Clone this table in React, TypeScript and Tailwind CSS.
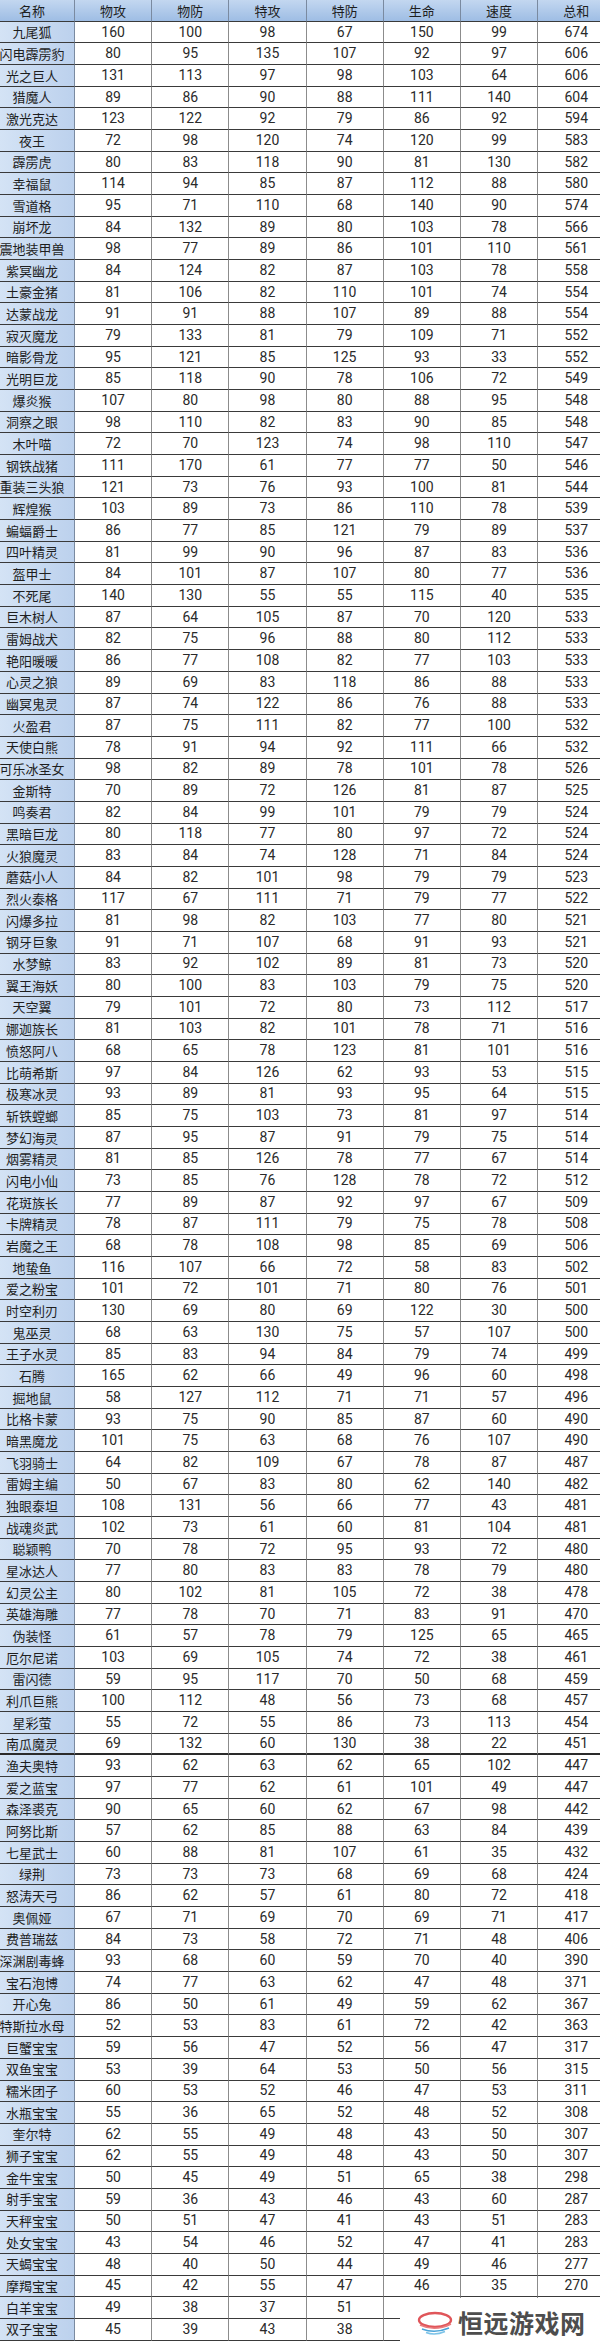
import React from "react";

type Row = [string, ...(number | null)[]];

const HEAD = ["名称", "物攻", "物防", "特攻", "特防", "生命", "速度", "总和"];

// name, 物攻, 物防, 特攻, 特防, 生命, 速度, 总和
const ROWS: Row[] = [
  ["九尾狐", 160, 100, 98, 67, 150, 99, 674],
  ["闪电霹雳豹", 80, 95, 135, 107, 92, 97, 606],
  ["光之巨人", 131, 113, 97, 98, 103, 64, 606],
  ["猎魔人", 89, 86, 90, 88, 111, 140, 604],
  ["激光克达", 123, 122, 92, 79, 86, 92, 594],
  ["夜王", 72, 98, 120, 74, 120, 99, 583],
  ["霹雳虎", 80, 83, 118, 90, 81, 130, 582],
  ["幸福鼠", 114, 94, 85, 87, 112, 88, 580],
  ["雪道格", 95, 71, 110, 68, 140, 90, 574],
  ["崩坏龙", 84, 132, 89, 80, 103, 78, 566],
  ["震地装甲兽", 98, 77, 89, 86, 101, 110, 561],
  ["紫冥幽龙", 84, 124, 82, 87, 103, 78, 558],
  ["土豪金猪", 81, 106, 82, 110, 101, 74, 554],
  ["达蒙战龙", 91, 91, 88, 107, 89, 88, 554],
  ["寂灭魔龙", 79, 133, 81, 79, 109, 71, 552],
  ["暗影骨龙", 95, 121, 85, 125, 93, 33, 552],
  ["光明巨龙", 85, 118, 90, 78, 106, 72, 549],
  ["爆炎猴", 107, 80, 98, 80, 88, 95, 548],
  ["洞察之眼", 98, 110, 82, 83, 90, 85, 548],
  ["木叶喵", 72, 70, 123, 74, 98, 110, 547],
  ["钢铁战猪", 111, 170, 61, 77, 77, 50, 546],
  ["重装三头狼", 121, 73, 76, 93, 100, 81, 544],
  ["辉煌猴", 103, 89, 73, 86, 110, 78, 539],
  ["蝙蝠爵士", 86, 77, 85, 121, 79, 89, 537],
  ["四叶精灵", 81, 99, 90, 96, 87, 83, 536],
  ["盔甲士", 84, 101, 87, 107, 80, 77, 536],
  ["不死尾", 140, 130, 55, 55, 115, 40, 535],
  ["巨木树人", 87, 64, 105, 87, 70, 120, 533],
  ["雷姆战犬", 82, 75, 96, 88, 80, 112, 533],
  ["艳阳暖暖", 86, 77, 108, 82, 77, 103, 533],
  ["心灵之狼", 89, 69, 83, 118, 86, 88, 533],
  ["幽冥鬼灵", 87, 74, 122, 86, 76, 88, 533],
  ["火盈君", 87, 75, 111, 82, 77, 100, 532],
  ["天使白熊", 78, 91, 94, 92, 111, 66, 532],
  ["可乐冰圣女", 98, 82, 89, 78, 101, 78, 526],
  ["金斯特", 70, 89, 72, 126, 81, 87, 525],
  ["鸣奏君", 82, 84, 99, 101, 79, 79, 524],
  ["黑暗巨龙", 80, 118, 77, 80, 97, 72, 524],
  ["火狼魔灵", 83, 84, 74, 128, 71, 84, 524],
  ["蘑菇小人", 84, 82, 101, 98, 79, 79, 523],
  ["烈火泰格", 117, 67, 111, 71, 79, 77, 522],
  ["闪爆多拉", 81, 98, 82, 103, 77, 80, 521],
  ["钢牙巨象", 91, 71, 107, 68, 91, 93, 521],
  ["水梦鲸", 83, 92, 102, 89, 81, 73, 520],
  ["翼王海妖", 80, 100, 83, 103, 79, 75, 520],
  ["天空翼", 79, 101, 72, 80, 73, 112, 517],
  ["娜迦族长", 81, 103, 82, 101, 78, 71, 516],
  ["愤怒阿八", 68, 65, 78, 123, 81, 101, 516],
  ["比萌希斯", 97, 84, 126, 62, 93, 53, 515],
  ["极寒冰灵", 93, 89, 81, 93, 95, 64, 515],
  ["斩铁螳螂", 85, 75, 103, 73, 81, 97, 514],
  ["梦幻海灵", 87, 95, 87, 91, 79, 75, 514],
  ["烟雾精灵", 81, 85, 126, 78, 77, 67, 514],
  ["闪电小仙", 73, 85, 76, 128, 78, 72, 512],
  ["花斑族长", 77, 89, 87, 92, 97, 67, 509],
  ["卡牌精灵", 78, 87, 111, 79, 75, 78, 508],
  ["岩魔之王", 68, 78, 108, 98, 85, 69, 506],
  ["地蛰鱼", 116, 107, 66, 72, 58, 83, 502],
  ["爱之粉宝", 101, 72, 101, 71, 80, 76, 501],
  ["时空利刃", 130, 69, 80, 69, 122, 30, 500],
  ["鬼巫灵", 68, 63, 130, 75, 57, 107, 500],
  ["王子水灵", 85, 83, 94, 84, 79, 74, 499],
  ["石腾", 165, 62, 66, 49, 96, 60, 498],
  ["掘地鼠", 58, 127, 112, 71, 71, 57, 496],
  ["比格卡蒙", 93, 75, 90, 85, 87, 60, 490],
  ["暗黑魔龙", 101, 75, 63, 68, 76, 107, 490],
  ["飞羽骑士", 64, 82, 109, 67, 78, 87, 487],
  ["雷姆主编", 50, 67, 83, 80, 62, 140, 482],
  ["独眼泰坦", 108, 131, 56, 66, 77, 43, 481],
  ["战魂炎武", 102, 73, 61, 60, 81, 104, 481],
  ["聪颖鸭", 70, 78, 72, 95, 93, 72, 480],
  ["星冰达人", 77, 80, 83, 83, 78, 79, 480],
  ["幻灵公主", 80, 102, 81, 105, 72, 38, 478],
  ["英雄海雕", 77, 78, 70, 71, 83, 91, 470],
  ["伪装怪", 61, 57, 78, 79, 125, 65, 465],
  ["厄尔尼诺", 103, 69, 105, 74, 72, 38, 461],
  ["雷闪德", 59, 95, 117, 70, 50, 68, 459],
  ["利爪巨熊", 100, 112, 48, 56, 73, 68, 457],
  ["星彩萤", 55, 72, 55, 86, 73, 113, 454],
  ["南瓜魔灵", 69, 132, 60, 130, 38, 22, 451],
  ["渔夫奥特", 93, 62, 63, 62, 65, 102, 447],
  ["爱之蓝宝", 97, 77, 62, 61, 101, 49, 447],
  ["森泽裘克", 90, 65, 60, 62, 67, 98, 442],
  ["阿努比斯", 57, 62, 85, 88, 63, 84, 439],
  ["七星武士", 60, 88, 81, 107, 61, 35, 432],
  ["绿荆", 73, 73, 73, 68, 69, 68, 424],
  ["怒涛天弓", 86, 62, 57, 61, 80, 72, 418],
  ["奥佩娅", 67, 71, 69, 70, 69, 71, 417],
  ["费普瑞兹", 84, 73, 58, 72, 71, 48, 406],
  ["深渊剧毒蜂", 93, 68, 60, 59, 70, 40, 390],
  ["宝石泡博", 74, 77, 63, 62, 47, 48, 371],
  ["开心兔", 86, 50, 61, 49, 59, 62, 367],
  ["特斯拉水母", 52, 53, 83, 61, 72, 42, 363],
  ["巨蟹宝宝", 59, 56, 47, 52, 56, 47, 317],
  ["双鱼宝宝", 53, 39, 64, 53, 50, 56, 315],
  ["糯米团子", 60, 53, 52, 46, 47, 53, 311],
  ["水瓶宝宝", 55, 36, 65, 52, 48, 52, 308],
  ["奎尔特", 62, 55, 49, 48, 43, 50, 307],
  ["狮子宝宝", 62, 55, 49, 48, 43, 50, 307],
  ["金牛宝宝", 50, 45, 49, 51, 65, 38, 298],
  ["射手宝宝", 59, 36, 43, 46, 43, 60, 287],
  ["天秤宝宝", 50, 51, 47, 41, 43, 51, 283],
  ["处女宝宝", 43, 54, 46, 52, 47, 41, 283],
  ["天蝎宝宝", 48, 40, 50, 44, 49, 46, 277],
  ["摩羯宝宝", 45, 42, 55, 47, 46, 35, 270],
  ["白羊宝宝", 49, 38, 37, 51, null, null, null],
  ["双子宝宝", 45, 39, 43, 38, null, null, null],
];

const CJK = "font-['Noto_Sans_CJK_SC','Noto_Sans',sans-serif]";

function Watermark() {
  return (
    <div className="absolute left-[400px] top-[2298px] flex h-[49px] w-[200px] items-center gap-[4px] bg-white pl-[16px]">
      <svg width="38" height="26" viewBox="0 0 38 26">
        <ellipse cx="19" cy="10" rx="16" ry="7" fill="none" stroke="#e0565a" strokeWidth="2.4" />
        <path d="M4 15 Q19 22 35 14" fill="none" stroke="#e97c7e" strokeWidth="1.6" />
        <path d="M6 19 Q19 24 33 18" fill="none" stroke="#4aa3d8" strokeWidth="1.6" />
        <path d="M10 22.5 Q19 26 29 21.5" fill="none" stroke="#7cc3e8" strokeWidth="1.4" />
      </svg>
      <span className={`${CJK} text-[25px] font-bold leading-none tracking-[0.5px] text-[#4d4d4d]`}>
        恒远游戏网
      </span>
    </div>
  );
}

export default function App() {
  return (
    <div className="relative h-[2347px] w-[600px] overflow-hidden bg-white">
      <div className="grid grid-cols-[75px_repeat(7,77.2px)] auto-rows-[21.68px]">
        {HEAD.map((h, i) => (
          <div
            key={h}
            className={`${CJK} flex items-center justify-center border-b border-r border-b-[#3a3a3a] border-r-[#7a8aa0] bg-gradient-to-b from-[#c3d7f0] to-[#9ebde4] text-[13px] text-[#1e1e1e] ${i === 0 ? "pr-[10px]" : ""}`}
          >
            {h}
          </div>
        ))}
        {ROWS.map((row, r) => {
          const thick = row[0] === "南瓜魔灵";
          return (
            <React.Fragment key={row[0] + r}>
              <div
                className={`${CJK} flex items-center justify-center whitespace-nowrap border-r border-r-[#7a8aa0] bg-gradient-to-r from-[#d4e3f5] to-[#bcd1ed] pr-[10px] text-[13px] text-[#1e1e1e] ${thick ? "border-b-2 border-b-[#2a2a2a]" : "border-b border-b-[#3a3a3a]"}`}
              >
                {row[0]}
              </div>
              {row.slice(1).map((v, c) => (
                <div
                  key={c}
                  className={`flex items-center justify-center border-r border-r-[#8c8c8c] font-['Roboto','Liberation_Sans',sans-serif] text-[14px] text-[#2a2a2a] ${thick ? "border-b-2 border-b-[#2a2a2a]" : "border-b border-b-[#3a3a3a]"}`}
                >
                  {v ?? ""}
                </div>
              ))}
            </React.Fragment>
          );
        })}
      </div>
      <Watermark />
    </div>
  );
}
